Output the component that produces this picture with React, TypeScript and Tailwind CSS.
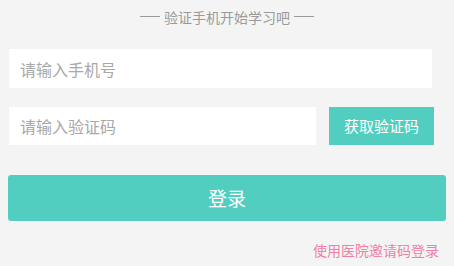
export default function App() {
  return (
    <div
      className="w-[454px] h-[266px] bg-[#f4f4f4] overflow-hidden"
      style={{ fontFamily: '"Noto Sans CJK SC", "Noto Sans", sans-serif' }}
    >
      {/* heading */}
      <div className="h-[33px] flex items-center justify-center gap-[4px] text-[14px] text-[#9a9a9a]">
        <span className="w-[20px] h-px bg-[#9a9a9a]" />
        <span className="leading-[20px]">验证手机开始学习吧</span>
        <span className="w-[20px] h-px bg-[#9a9a9a]" />
      </div>

      {/* phone */}
      <div className="mt-[16px] ml-[9px] w-[423px] h-[39px] bg-white flex items-center px-[11px]">
        <input
          className="w-full bg-transparent outline-none text-[16px] text-[#333] placeholder:text-[#a8a8a8]"
          placeholder="请输入手机号"
        />
      </div>

      {/* code */}
      <div className="mt-[19px] ml-[9px] flex gap-[13px]">
        <div className="w-[307px] h-[38px] bg-white flex items-center px-[11px]">
          <input
            className="w-full bg-transparent outline-none text-[16px] text-[#333] placeholder:text-[#a8a8a8]"
            placeholder="请输入验证码"
          />
        </div>
        <button className="w-[105px] h-[38px] bg-[#52cec0] text-white text-[15px]">
          获取验证码
        </button>
      </div>

      {/* login */}
      <button className="mt-[30px] ml-[8px] w-[438px] h-[46px] rounded-[3px] bg-[#52cec0] text-white text-[19px] block">
        登录
      </button>

      {/* invite link */}
      <div className="mt-[19px] pr-[15px] flex justify-end">
        <a className="text-[14px] leading-[20px] text-[#f27fa6]">使用医院邀请码登录</a>
      </div>
    </div>
  );
}
